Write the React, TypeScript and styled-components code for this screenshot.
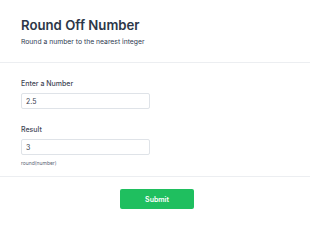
import React, { useState } from "react";
import styled, { createGlobalStyle } from "styled-components";

const GlobalStyle = createGlobalStyle`
    body {
        margin: 0;
        background: #ffffff;
        font-family: Inter, "Liberation Sans", sans-serif;
    }
`;

const Page = styled.div`
    width: 310px;
    background: #ffffff;
`;

const Header = styled.header`
    padding: 17px 21px 16px;
    border-bottom: 1px solid #eceef1;
`;

const Title = styled.h1`
    margin: 0;
    font-size: 13.2px;
    line-height: 17px;
    font-weight: 600;
    color: #2d3748;
`;

const Subtitle = styled.p`
    margin: 3px 0 0;
    font-size: 6.8px;
    line-height: 9px;
    color: #2f3b52;
`;

const Form = styled.form`
    display: flex;
    flex-direction: column;
    padding: 16px 21px 0;
`;

const Field = styled.div<{ last?: boolean }>`
    display: flex;
    flex-direction: column;
    margin-bottom: ${(props) => (props.last ? "10px" : "16px")};
`;

const Label = styled.label`
    font-size: 7px;
    line-height: 9px;
    font-weight: 500;
    color: #3f4756;
    margin-bottom: 5px;
`;

const Input = styled.input`
    box-sizing: border-box;
    width: 129px;
    height: 16px;
    padding: 0 4px;
    border: 1px solid #dfe3e8;
    border-radius: 2px;
    font-family: inherit;
    font-size: 7px;
    color: #3a4250;
    outline: none;
`;

const Hint = styled.span`
    margin-top: 5px;
    font-size: 5px;
    line-height: 6px;
    color: #5a6472;
`;

const Footer = styled.div`
    display: flex;
    justify-content: center;
    border-top: 1px solid #eceef1;
    margin: 0 -21px;
    padding: 12px 0 16px 4px;
`;

const SubmitButton = styled.button`
    width: 74px;
    height: 20px;
    border: none;
    border-radius: 2px;
    background: #1fbf5f;
    color: #ffffff;
    font-family: inherit;
    font-size: 7px;
    font-weight: 600;
    cursor: pointer;
`;

export default function App() {
    const [value, setValue] = useState("2.5");
    const parsed = parseFloat(value);
    const result = isNaN(parsed) ? "" : String(Math.round(parsed));

    return (
        <Page>
            <GlobalStyle />
            <Header>
                <Title>Round Off Number</Title>
                <Subtitle>Round a number to the nearest integer</Subtitle>
            </Header>
            <Form onSubmit={(e) => e.preventDefault()}>
                <Field>
                    <Label>Enter a Number</Label>
                    <Input value={value} onChange={(e) => setValue(e.target.value)} />
                </Field>
                <Field last>
                    <Label>Result</Label>
                    <Input value={result} readOnly />
                    <Hint>round(number)</Hint>
                </Field>
                <Footer>
                    <SubmitButton type="submit">Submit</SubmitButton>
                </Footer>
            </Form>
        </Page>
    );
}
